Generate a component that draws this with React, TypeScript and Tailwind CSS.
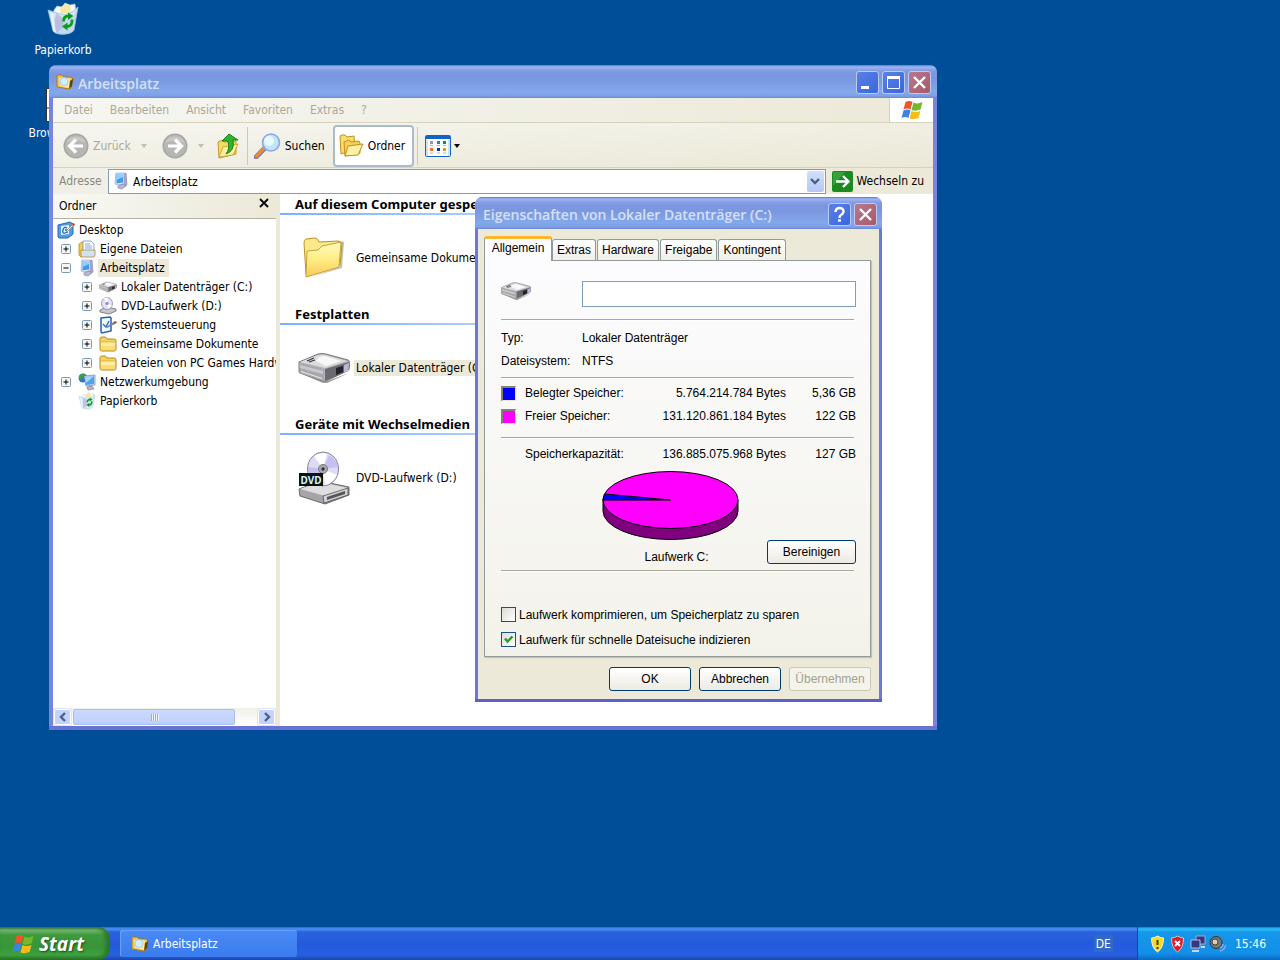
import React, { useState } from 'react';

/* Icons */

function BinIcon({ className }: { className: string }) {
  return (
    <svg viewBox="0 0 32 34" className={className} aria-hidden="true">
      <path d="M7 8l3-4 5 1 3-4 5 2 5-1 1 8-3 5H6z" fill="#f4f7fb" stroke="#b9c8d8" strokeWidth=".6" />
      <path d="M13 6l5-4 5 1 1 7-10 2z" fill="#f8e9a2" />
      <path d="M1 8l6 2 10 3 8-3 6-5-4 23c-2 5-18 6-21 1z" fill="#cfe6f7" fillOpacity=".92" stroke="#9cc4e4" strokeWidth=".8" />
      <path d="M9 11l6 4 2 9-7 7-3-4z" fill="#b8b4dc" fillOpacity=".7" />
      <path d="M3 10l3 18 3 3-3-20z" fill="#fff" fillOpacity=".7" />
      <path d="M16.500 19.500q0-5.500 5-5.500M25 17.500q.5 7-5 7" fill="none" stroke="#109a1c" strokeWidth="2.800" />
      <path d="M21 10.500l5.500 3.500-5.500 4zM20.500 20.500v8L15 24.500z" fill="#109a1c" />
    </svg>
  );
}

function FolderIcon({ className }: { className: string }) {
  return (
    <svg viewBox="0 0 42 42" className={className} aria-hidden="true">
      <path d="M4 41l35-10 2-26-2-1-2 26z" fill="#8f8a78" opacity=".55" />
      <path d="M1 6q0-3 2-4l9-1q3 0 4 4l19-1q4 0 4 4l-2 20-34 9z" fill="#fbe88a" stroke="#b99328" />
      <path d="M4 14l11-1 4-4 19-4-2 25-33 10z" fill="url(#folderFront)" stroke="#c39a2c" strokeWidth=".9" />
      <defs>
        <linearGradient id="folderFront" x1="0" y1="0" x2="0" y2="1">
          <stop offset="0" stopColor="#fffac0" />
          <stop offset=".5" stopColor="#ffee84" />
          <stop offset="1" stopColor="#fbc75a" />
        </linearGradient>
      </defs>
    </svg>
  );
}

function SmallFolderIcon({ className }: { className: string }) {
  return (
    <svg viewBox="0 0 18 18" className={className} aria-hidden="true">
      <path d="M1 4q0-2 2-2h3q1 0 2 2h7q2 0 2 2v8q0 2-2 2H3q-2 0-2-2z" fill="#f7d263" stroke="#b88c1c" />
      <path d="M1.500 7h15v7q0 1.500-1.500 1.500H3q-1.500 0-1.500-1.500z" fill="#fff0a0" stroke="#d0a437" strokeWidth=".7" />
      <path d="M2 11h14v3q0 1-1 1H3q-1 0-1-1z" fill="#fbdc78" />
    </svg>
  );
}

function DriveIcon({ className }: { className: string }) {
  return (
    <svg viewBox="0 0 52 30" className={className} aria-hidden="true">
      <path d="M2 20l24 9 25-9-24 11z" fill="#444" opacity=".5" />
      <path d="M1 9L20 1q4-1 8 0l22 6q2 1 2 3l-1 6q0 1-2 2L28 28q-2 1-4 0L2 20q-1 0-1-2z" fill="#b3b3b6" stroke="#6a6b70" strokeWidth=".9" />
      <path d="M2 9L20 2q4-1 8 0l21 6-22 7z" fill="#dcdcde" />
      <path d="M18 8q2-5 9-5l16 5-15 5z" fill="#f8f8f8" />
      <path d="M9 8l7-3M11 9l6-2" stroke="#333" strokeWidth="1.200" />
      <path d="M1 10l25 6v12L2 20z" fill="#a9a9ad" />
      <path d="M2 12l23 6v3L2 15z" fill="#c9c9cd" />
      <path d="M3 18l21 7v1L3 19z" fill="#ececee" />
      <path d="M27 16l24-7-1 9-23 10z" fill="#6a6a70" />
      <path d="M38 15l7-2v6l-7 3z" fill="#242428" />
      <path d="M46 12l5-2-1 8-4 2z" fill="#b9b7da" />
    </svg>
  );
}

function DvdIcon({ className }: { className: string }) {
  return (
    <svg viewBox="0 0 52 54" className={className} aria-hidden="true">
      <path d="M1 38l21-8 29 6v8L27 53 2 45z" fill="#a5a5a8" stroke="#5d5d62" strokeWidth=".9" />
      <path d="M2 38l20-7 28 6-23 8z" fill="#dededf" />
      <path d="M25 45l25-8v7L26 52z" fill="#d0d0d2" stroke="#444" strokeWidth=".7" />
      <path d="M29 46l18-6v3l-18 6z" fill="#55555a" />
      <ellipse cx="25" cy="18" rx="15.500" ry="17" fill="#dcdcf6" stroke="#85859c" />
      <path d="M25 18L16 5q7-4 13-2zM25 18l14 6q-4 8-12 10z" fill="#fff" />
      <path d="M25 18l6-14q8 5 9 12zM25 18L10 16q-1 8 5 14z" fill="#b9b5f0" opacity=".7" />
      <circle cx="25" cy="18" r="4.500" fill="#a9a9b5" stroke="#777" />
      <circle cx="25" cy="18" r="1.700" fill="#333" />
      <path d="M1 22h24v13H1z" fill="#061418" />
      <text x="13" y="33" textAnchor="middle" className="fill-[#d9f3f5] font-['Noto_Sans'] text-[10px] font-bold">DVD</text>
    </svg>
  );
}

function SmallDvdIcon({ className }: { className: string }) {
  return (
    <svg viewBox="0 0 18 18" className={className} aria-hidden="true">
      <path d="M1 13l6-3 10 2v2l-7 3-9-2z" fill="#c6c6ca" stroke="#6b6b70" strokeWidth=".8" />
      <ellipse cx="8" cy="6.500" rx="5.500" ry="6" fill="#e3e1fa" stroke="#8886a8" strokeWidth=".8" />
      <path d="M8 6L5 1l4-.5zM8 6l5 3-4 3z" fill="#fff" />
      <circle cx="8" cy="6.500" r="1.500" fill="#8b8b9c" />
    </svg>
  );
}

function ComputerIcon({ className }: { className: string }) {
  return (
    <svg viewBox="0 0 18 18" className={className} aria-hidden="true">
      <path d="M11 2l3-1 1 12-4 2z" fill="#a7a5cc" stroke="#8a88b4" strokeWidth=".7" />
      <path d="M4 1h8v11l-7 1-2-1z" fill="#e6e8f2" stroke="#9a9ec0" strokeWidth=".7" />
      <path d="M4.500 2H11v8.500l-6.500 1z" fill="#3e9af0" />
      <path d="M4.500 2H11v3L4.500 8z" fill="#8fd0ff" />
      <path d="M6 14l5-2 3 2-4 3-4-1z" fill="#b7b7d4" stroke="#7a7aa2" strokeWidth=".6" />
    </svg>
  );
}

function NetworkIcon({ className }: { className: string }) {
  return (
    <svg viewBox="0 0 18 18" className={className} aria-hidden="true">
      <circle cx="5" cy="5" r="4.500" fill="#2f74cf" />
      <path d="M1 3q3-3 6-2L5 4 3 7 1 6z" fill="#38a534" />
      <path d="M6 3l11-1v10l-9 1z" fill="#d8dcf0" stroke="#7a80a8" strokeWidth=".7" />
      <path d="M7 4l9-1v8l-8 1z" fill="#4aa5ef" />
      <path d="M7 4l9-1-8 7z" fill="#a3dafc" />
      <path d="M9 14l5-1 2 3-6 1z" fill="#b4b4d0" stroke="#6f6f95" strokeWidth=".6" />
    </svg>
  );
}

function DesktopIcon({ className }: { className: string }) {
  return (
    <svg viewBox="0 0 18 18" className={className} aria-hidden="true">
      <path d="M1 4l12-3 3 2v10l-5 4H2l-1-1z" fill="#4f9de6" stroke="#2766ae" />
      <path d="M4 5l8-1v9l-8 1z" fill="#e5f3fd" />
      <path d="M10 7q-3-2-4 2t2 3l3-1M8 9h3" fill="none" stroke="#1e66b5" strokeWidth="1.300" />
      <path d="M9 10l7-7 1 1-7 7z" fill="#f2f2f2" stroke="#555" strokeWidth=".5" />
      <path d="M15 3l2-1 1 2-2 1z" fill="#d04025" />
    </svg>
  );
}

function DocumentsIcon({ className }: { className: string }) {
  return (
    <svg viewBox="0 0 18 18" className={className} aria-hidden="true">
      <path d="M1 4l3-2 2 1v13l-3 1-2-2z" fill="#f5cd58" stroke="#b4871c" strokeWidth=".8" />
      <path d="M5 1h8l3 3v9H5z" fill="#fff" stroke="#6d8fc0" strokeWidth=".8" />
      <path d="M7 4h5M7 6h7M7 8h7" stroke="#79a7de" />
      <path d="M3 10h14v5q0 2-2 2H3z" fill="#cfe2f8" stroke="#b4871c" strokeWidth=".8" />
    </svg>
  );
}

function ControlPanelIcon({ className }: { className: string }) {
  return (
    <svg viewBox="0 0 18 18" className={className} aria-hidden="true">
      <path d="M2 2l9-1 1 1v13l-9 2-1-1z" fill="#f2f8ff" stroke="#2161b0" strokeWidth="1.500" />
      <path d="M4 8l3 3 3-6" fill="none" stroke="#2b6fc4" strokeWidth="1.400" />
      <path d="M7 11l8-5 1 2-8 4z" fill="#6f86a8" />
      <path d="M14 6l3-1 1 2-3 1z" fill="#a35a36" />
      <path d="M6 12l2-1v1z" fill="#e0a030" />
    </svg>
  );
}

function SearchFolderIcon({ className }: { className: string }) {
  return (
    <svg viewBox="0 0 18 16" className={className} aria-hidden="true">
      <path d="M1 2q0-1 1-1h4l2 2h7l2 2-2 9-2 1-12-2z" fill="#f5c64c" stroke="#a87a1c" />
      <path d="M3 4l9 0 2 1-1 9-9-2z" fill="#ffe9a0" />
      <circle cx="8" cy="7.500" r="4" fill="#d3efff" stroke="#9fcce8" />
      <path d="M13 15l1-8 3-2-1 7z" fill="#5c4312" />
    </svg>
  );
}

function WindowsFlag({ className }: { className: string }) {
  return (
    <svg viewBox="0 0 22 20" className={className} aria-hidden="true">
      <path d="M4.500 2q4-2 7 0L9.500 9.500q-3-2-7 0z" fill="#e8582a" />
      <path d="M12.500 2.500q4 2 9-.5l-2 7.500q-5 2-9 .5z" fill="#75b928" />
      <path d="M2.500 10.500q4-2 7 0L7.500 18q-3-2-7 0z" fill="#3c84dc" />
      <path d="M10.500 11q4 2 9 0l-2 7q-5 2-9 .5z" fill="#f6bd18" />
    </svg>
  );
}

function NavCircle({ flip }: { flip?: boolean }) {
  return (
    <svg viewBox="0 0 26 26" className={flip ? 'size-[26px] -scale-x-100' : 'size-[26px]'} aria-hidden="true">
      <circle cx="13" cy="13" r="12.500" fill="#a6a6a4" />
      <circle cx="13" cy="13" r="11" fill="#b6b6b4" />
      <path d="M3 10a11 11 0 0 1 20 0q-10-5-20 0z" fill="#c8c8c6" />
      <path d="M13 6.500L6.500 13l6.500 6.500M7 13h13" fill="none" stroke="#fff" strokeWidth="3.200" />
    </svg>
  );
}

function UpIcon() {
  return (
    <svg viewBox="0 0 22 26" className="h-[26px] w-[22px]" aria-hidden="true">
      <path d="M1 9l4-2 2 2 12-1v13L2 25z" fill="#f7d867" stroke="#c29a2a" />
      <path d="M2 24l4-10 15-3-5 11z" fill="#ffef9e" stroke="#c29a2a" strokeWidth=".8" />
      <path d="M12 1l9 6h-5q2 11-7 14 4-5 2-13H5z" fill="#2fb52c" stroke="#0e7714" strokeWidth=".9" />
    </svg>
  );
}

function SearchIcon() {
  return (
    <svg viewBox="0 0 27 26" className="h-[26px] w-[27px]" aria-hidden="true">
      <path d="M2 24l9-9" stroke="#8d7aa5" strokeWidth="5" strokeLinecap="round" />
      <path d="M2.500 23l8-8" stroke="#f08b34" strokeWidth="3" strokeLinecap="round" />
      <circle cx="17" cy="9.500" r="8.500" fill="#bfe4fd" stroke="#8ea6e0" strokeWidth="1.600" />
      <circle cx="15" cy="8" r="5" fill="#e9f8ff" />
    </svg>
  );
}

function FoldersIcon() {
  return (
    <svg viewBox="0 0 25 24" className="h-6 w-[25px]" aria-hidden="true">
      <path d="M1 3q0-2 2-2l3 0 2 2 7-1 1 12-8 4-6 2z" fill="#f9dd6c" stroke="#c18f22" />
      <path d="M5 8l5-2 2 2 8-1 1 2v10L6 22z" fill="#f7d055" stroke="#c18f22" />
      <path d="M6 22L9 12l15-2-5 11z" fill="#fff0a2" stroke="#c18f22" />
    </svg>
  );
}

function ViewsIcon() {
  return (
    <svg viewBox="0 0 26 22" className="h-[22px] w-[26px]" aria-hidden="true">
      <rect x=".5" y=".5" width="25" height="21" rx="1" fill="#fff" stroke="#1263c8" />
      <path d="M1 1h24v3H1z" fill="#1263c8" />
      <path d="M1 5h2v16H1zM23 5h2v16h-2z" fill="#cfe0f7" />
      <path d="M5 6h3v3H5z" fill="#9a8fd0" />
      <path d="M12 6h3v3h-3z" fill="#1680e8" />
      <path d="M18 6h3v3h-3z" fill="#149a20" />
      <path d="M5 13h3v3H5z" fill="#ff6a35" />
      <path d="M12 13h3v3h-3z" fill="#0a33a0" />
      <path d="M18 13h3v3h-3z" fill="#d5a207" />
      <path d="M5 10.500h3M12 10.500h3M18 10.500h3M5 18h3M12 18h3M18 18h3" stroke="#b4b4b4" />
    </svg>
  );
}

function Caret({ className }: { className: string }) {
  return (
    <svg viewBox="0 0 6 4" className={className} aria-hidden="true">
      <path d="M0 0h6L3 4z" fill="currentColor" />
    </svg>
  );
}

function Chevron({ className }: { className: string }) {
  return (
    <svg viewBox="0 0 10 10" className={className} aria-hidden="true">
      <path d="M1 3l4 4 4-4" fill="none" stroke="#4d6185" strokeWidth="2.400" />
    </svg>
  );
}

/* Window chrome */

const titleGradient =
  'bg-[linear-gradient(to_bottom,#5d76d3_0,#9fb6ee_2px,#86a0e6_5px,#7a96df_9px,#7b98e1_45%,#82a8ea_80%,#7f9fe6_94%,#6b84d8_100%)]';

type CaptionKind = 'min' | 'max' | 'help' | 'close';

function CaptionButton({ kind, label }: { kind: CaptionKind; label: string }) {
  return (
    <button
      type="button"
      aria-label={label}
      className={`flex size-[23px] items-center justify-center rounded-[3px] border border-[#bccaf2] ${
        kind === 'close'
          ? 'bg-linear-to-br from-[#b8788f] to-[#a75a68]'
          : 'bg-linear-to-br from-[#5b80e4] to-[#3767e0]'
      }`}
    >
      <svg viewBox="0 0 21 21" className="size-[21px]" fill="none" stroke="#fff" aria-hidden="true">
        {kind === 'min' && <path d="M4 15.500h8" strokeWidth="3" />}
        {kind === 'max' && (
          <>
            <path d="M4.500 5v11.500h12V5" />
            <path d="M4 5.500h13" strokeWidth="3" />
          </>
        )}
        {kind === 'close' && <path d="M5 5l11 11M16 5L5 16" strokeWidth="2.400" />}
        {kind === 'help' && (
          <>
            <path d="M6.500 8q0-4 4-4t4 3.500q0 2-2.500 3.500-1.500 1-1.500 3" strokeWidth="2.400" />
            <path d="M9 16.500h3" strokeWidth="2.400" />
          </>
        )}
      </svg>
    </button>
  );
}

/* Explorer */

const menus = ['Datei', 'Bearbeiten', 'Ansicht', 'Favoriten', 'Extras', '?'];

interface TreeNode {
  label: string;
  level: 0 | 1 | 2;
  expander?: '+' | '-';
  selected?: boolean;
  Icon: (props: { className: string }) => React.ReactElement;
}

const tree: TreeNode[] = [
  { label: 'Desktop', level: 0, Icon: DesktopIcon },
  { label: 'Eigene Dateien', level: 1, expander: '+', Icon: DocumentsIcon },
  { label: 'Arbeitsplatz', level: 1, expander: '-', selected: true, Icon: ComputerIcon },
  { label: 'Lokaler Datenträger (C:)', level: 2, expander: '+', Icon: DriveIcon },
  { label: 'DVD-Laufwerk (D:)', level: 2, expander: '+', Icon: SmallDvdIcon },
  { label: 'Systemsteuerung', level: 2, expander: '+', Icon: ControlPanelIcon },
  { label: 'Gemeinsame Dokumente', level: 2, expander: '+', Icon: SmallFolderIcon },
  { label: 'Dateien von PC Games Hardware', level: 2, expander: '+', Icon: SmallFolderIcon },
  { label: 'Netzwerkumgebung', level: 1, expander: '+', Icon: NetworkIcon },
  { label: 'Papierkorb', level: 1, Icon: BinIcon },
];

const indent = { 0: 'pl-1', 1: 'pl-2', 2: 'pl-[29px]' };

function TreeRow({ node }: { node: TreeNode }) {
  return (
    <li className={`flex h-[19px] items-center whitespace-nowrap ${indent[node.level]}`}>
      {node.level > 0 && (
        <span className="mr-[7px] flex size-[10px] shrink-0">
          {node.expander && (
            <button type="button" aria-label={`${node.label} umschalten`} className="size-[10px]">
              <svg viewBox="0 0 10 10" className="size-[10px]" aria-hidden="true">
                <rect x=".5" y=".5" width="9" height="9" rx="1" fill="#f6f5ef" stroke="#7b98b8" />
                <path d={node.expander === '+' ? 'M2.500 5h5M5 2.500v5' : 'M2.500 5h5'} stroke="#000" />
              </svg>
            </button>
          )}
        </span>
      )}
      <node.Icon className="h-[18px] w-[18px] shrink-0" />
      <a href="#" className={`ml-[2px] px-[2px] leading-[18px] ${node.selected ? 'bg-[#ece9d8] pr-1' : ''}`}>
        {node.label}
      </a>
    </li>
  );
}

const groups = [
  { title: 'Auf diesem Computer gespeicherte Dateien', item: 'Gemeinsame Dokumente', Icon: FolderIcon, size: 'h-[42px] w-[42px]' },
  { title: 'Festplatten', item: 'Lokaler Datenträger (C:)', Icon: DriveIcon, size: 'h-[30px] w-[52px]', selected: true },
  { title: 'Geräte mit Wechselmedien', item: 'DVD-Laufwerk (D:)', Icon: DvdIcon, size: 'h-[54px] w-[52px]' },
];

function ScrollButton({ side }: { side: 'left' | 'right' }) {
  return (
    <button
      type="button"
      aria-label={side === 'left' ? 'Nach links' : 'Nach rechts'}
      className="flex h-4 w-[17px] items-center justify-center rounded-[2px] border border-white bg-[#c3d3fb] shadow-[0_0_0_1px_#dbe4f8]"
    >
      <Chevron className={side === 'left' ? 'size-[10px] rotate-90' : 'size-[10px] -rotate-90'} />
    </button>
  );
}

function Explorer() {
  return (
    <section
      aria-label="Arbeitsplatz"
      className="absolute top-[65px] left-[49px] flex h-[665px] w-[888px] flex-col rounded-t-[8px] border-b-4 border-[#6673d2] bg-[#7785dc]"
    >
      <header className={`flex h-[33px] shrink-0 items-center rounded-t-[7px] pr-[6px] pl-[7px] ${titleGradient}`}>
        <SearchFolderIcon className="h-4 w-[18px]" />
        <h1 className="ml-1 flex-1 pt-1 font-['Open_Sans',sans-serif] text-[14px] font-semibold text-[#d5e0f8]">Arbeitsplatz</h1>
        <div className="flex gap-[3px] pt-[2px]">
          <CaptionButton kind="min" label="Minimieren" />
          <CaptionButton kind="max" label="Maximieren" />
          <CaptionButton kind="close" label="Schließen" />
        </div>
      </header>

      <div className="mx-1 flex min-h-0 flex-1 flex-col bg-white">
        <div className="flex h-[25px] shrink-0 border-b border-[#d8d2bd] bg-linear-to-r from-[#f6f6f2] to-[#ece9d8]">
          <nav className="flex flex-1 items-center gap-[17px] pl-[11px] text-[#aca899]">
            {menus.map((menu) => (
              <button type="button" key={menu}>{menu}</button>
            ))}
          </nav>
          <div className="flex w-[44px] items-center justify-center border-l border-[#d8d2bd] bg-white">
            <WindowsFlag className="h-5 w-[22px]" />
          </div>
        </div>

        {/* Toolbar */}
        <div className="flex h-[45px] shrink-0 items-center border-b border-[#d8d2bd] bg-linear-to-br from-[#f6f6f1] to-[#ebe8d6] pt-[2px] pl-[10px]">
          <button type="button" disabled className="flex items-center text-[#aca899]">
            <NavCircle />
            <span className="ml-1">Zurück</span>
            <Caret className="ml-[10px] h-1 w-[6px] text-[#c2bfb2]" />
          </button>
          <button type="button" disabled aria-label="Vorwärts" className="ml-[15px] flex items-center text-[#c2bfb2]">
            <NavCircle flip />
            <Caret className="ml-[10px] h-1 w-[6px]" />
          </button>
          <button type="button" aria-label="Aufwärts" className="ml-[13px]">
            <UpIcon />
          </button>
          <span className="ml-2 h-[38px] w-px bg-[#cdc9b8]" />
          <button type="button" className="ml-[6px] flex items-center">
            <SearchIcon />
            <span className="ml-1">Suchen</span>
          </button>
          <button
            type="button"
            aria-pressed="true"
            className="ml-2 flex h-[42px] w-[81px] items-center rounded-[4px] border-2 border-[#a9bccb] bg-white pl-1"
          >
            <FoldersIcon />
            <span className="ml-1">Ordner</span>
          </button>
          <span className="ml-[3px] h-[38px] w-px bg-[#cdc9b8]" />
          <button type="button" aria-label="Ansichten" className="ml-[7px] flex items-center">
            <ViewsIcon />
            <Caret className="ml-[3px] h-1 w-[6px]" />
          </button>
        </div>

        {/* Address bar */}
        <div className="flex h-[26px] shrink-0 items-center bg-linear-to-r from-[#f1f0e8] to-[#ece9d8]">
          <label htmlFor="address" className="w-[55px] pl-[6px] text-[#8b887b]">Adresse</label>
          <div className="relative flex h-[25px] flex-1 items-center border border-[#7f9db9] bg-white pl-[3px]">
            <ComputerIcon className="size-[18px]" />
            <select id="address" className="h-full flex-1 appearance-none bg-transparent pt-px pl-[3px] outline-none">
              <option>Arbeitsplatz</option>
            </select>
            <span className="pointer-events-none absolute right-px flex h-[21px] w-[17px] items-center justify-center rounded-[2px] bg-linear-to-b from-[#d3dffc] to-[#b4c8f6]">
              <Chevron className="size-[10px]" />
            </span>
          </div>
          <button type="button" className="flex items-center pr-[9px] pl-[6px]">
            <svg viewBox="0 0 21 21" className="size-[21px]" aria-hidden="true">
              <rect width="21" height="21" rx="2" fill="#1c8a22" />
              <path d="M1 1h12L1 15z" fill="#4fae50" opacity=".6" />
              <path d="M4 10.500h12M11 5l5.500 5.500L11 16" fill="none" stroke="#fff" strokeWidth="2.400" />
            </svg>
            <span className="ml-1">Wechseln zu</span>
          </button>
        </div>

        <div className="flex min-h-0 flex-1">
          <aside className="flex w-[227px] shrink-0 flex-col border-r-4 border-[#ece9d8]">
            <div className="flex h-[25px] items-center justify-between border-b border-[#b5b2a4] bg-linear-to-r from-[#f8f8f5] to-[#ece9d8] pr-[7px] pl-[6px]">
              <h2>Ordner</h2>
              <button type="button" aria-label="Ordnerleiste schließen" className="pb-[6px]">
                <svg viewBox="0 0 10 10" className="size-[10px]" aria-hidden="true">
                  <path d="M1 1l8 8M9 1L1 9" stroke="#000" strokeWidth="1.800" />
                </svg>
              </button>
            </div>
            <ul className="flex-1 overflow-hidden pt-px">
              {tree.map((node) => (
                <TreeRow key={node.label} node={node} />
              ))}
            </ul>
            <div className="flex h-[18px] items-center bg-linear-to-b from-[#f0efe8] to-white px-px">
              <ScrollButton side="left" />
              <span className="ml-[2px] flex h-4 w-[162px] items-center justify-center gap-px rounded-[2px] border border-[#a9bff0] bg-linear-to-b from-[#cbdafd] to-[#bdcffa]">
                {[0, 1, 2, 3].map((i) => (
                  <span key={i} className="h-[7px] w-px bg-[#8fadf0] shadow-[1px_0_0_#eef4fe]" />
                ))}
              </span>
              <span className="flex-1" />
              <ScrollButton side="right" />
            </div>
          </aside>

          <div className="min-w-0 flex-1 overflow-hidden whitespace-nowrap">
            {groups.map(({ title, item, Icon, size, selected }) => (
              <section key={title} className="flex h-[110px] flex-col">
                <h2 className="pt-px pl-[15px] font-['Noto_Sans',sans-serif] text-[13px] leading-[18px] font-bold">{title}</h2>
                <div className="h-[2px] bg-linear-to-r from-[#7db2fb] to-white to-90%" />
                <a href="#" className="flex flex-1 items-center pb-[3px] pl-[18px]">
                  <span className="mr-1 flex w-[52px] justify-center">
                    <Icon className={size} />
                  </span>
                  <span className={`px-[2px] ${selected ? 'bg-[#ece9d8]' : ''}`}>{item}</span>
                </a>
              </section>
            ))}
          </div>
        </div>
      </div>
    </section>
  );
}

/* Properties dialog */

const tabs = ['Allgemein', 'Extras', 'Hardware', 'Freigabe', 'Kontingent'];

const usage = [
  { label: 'Belegter Speicher:', bytes: '5.764.214.784 Bytes', gb: '5,36 GB', swatch: 'bg-[#0000ff]' },
  { label: 'Freier Speicher:', bytes: '131.120.861.184 Bytes', gb: '122 GB', swatch: 'bg-[#ff00ff]' },
];

function Divider() {
  return <hr className="mr-[2px] h-[2px] border-t border-b border-t-[#aca899] border-b-white" />;
}

function UsagePie() {
  return (
    <svg viewBox="0 0 137 70" className="h-[70px] w-[137px]" role="img" aria-label="Speicherbelegung">
      <path d="M1 29v11a67.500 28.500 0 0 0 135 0V29z" fill="#800080" stroke="#000" />
      <ellipse cx="68.500" cy="29" rx="67.500" ry="28.500" fill="#ff00ff" stroke="#000" />
      <path d="M68.500 29H1q0-3 2-6z" fill="#0000ff" stroke="#000" />
    </svg>
  );
}

function DialogButton({ children, wide, disabled }: { children: string; wide?: boolean; disabled?: boolean }) {
  return (
    <button
      type="button"
      disabled={disabled}
      className={`h-6 rounded-[3px] border ${wide ? 'w-[89px]' : 'w-[82px]'} ${
        disabled
          ? 'border-[#c9c7ba] bg-[#f5f4ea] text-[#a1a192]'
          : 'border-[#003c74] bg-linear-to-b from-white to-[#eceae2]'
      }`}
    >
      {children}
    </button>
  );
}

function Properties() {
  const [label, setLabel] = useState('');
  const [compress, setCompress] = useState(false);
  const [index, setIndex] = useState(true);

  const options = [
    { id: 'compress', text: 'Laufwerk komprimieren, um Speicherplatz zu sparen', value: compress, set: setCompress },
    { id: 'index', text: 'Laufwerk für schnelle Dateisuche indizieren', value: index, set: setIndex },
  ];

  return (
    <section
      role="dialog"
      aria-label="Eigenschaften von Lokaler Datenträger (C:)"
      className="absolute top-[197px] left-[475px] w-[407px] rounded-t-[8px] border-b-[3px] border-[#5a61c8] bg-[#6a78d8] font-['Liberation_Sans',Arial,sans-serif] text-[12px]"
    >
      <header className={`flex h-8 items-center rounded-t-[7px] pr-[5px] pl-2 ${titleGradient}`}>
        <h2 className="flex-1 pt-1 font-['Open_Sans',sans-serif] text-[14px] font-semibold text-[#d5e0f8]">
          Eigenschaften von Lokaler Datenträger (C:)
        </h2>
        <div className="flex gap-[3px] pt-[2px]">
          <CaptionButton kind="help" label="Hilfe" />
          <CaptionButton kind="close" label="Schließen" />
        </div>
      </header>

      <div className="mx-[3px] bg-[#ece9d8] pt-[7px] pr-2 pb-2 pl-[6px]">
        <div role="tablist" className="flex h-6 items-end">
          {tabs.map((tab, i) => (
            <button
              type="button"
              role="tab"
              key={tab}
              aria-selected={i === 0}
              className={
                i === 0
                  ? 'relative z-10 -mb-px h-[25px] w-[68px] rounded-t-[3px] border-x border-t-[3px] border-x-[#919b9c] border-t-[#ffb62e] bg-[#fcfcfe] pb-1'
                  : 'mr-px h-[21px] rounded-t-[3px] border border-b-0 border-[#919b9c] bg-linear-to-b from-white to-[#f0efe7] px-1'
              }
            >
              {tab}
            </button>
          ))}
        </div>

        <div className="border border-[#919b9c] bg-linear-to-b from-[#fcfcfe] to-[#f3f2ea] pt-5 pr-[14px] pb-1 pl-4 shadow-[1px_1px_1px_#c6c3b4]">
          <div className="flex h-[26px] items-start justify-between">
            <DriveIcon className="h-5 w-[30px]" />
            <input
              aria-label="Bezeichnung"
              value={label}
              onChange={(e) => setLabel(e.target.value)}
              className="h-[26px] w-[274px] border border-[#7f9db9] bg-white px-1 outline-none"
            />
          </div>
          <div className="h-3" />
          <Divider />

          <dl className="mt-[6px] mb-1 grid grid-cols-[81px_1fr] leading-[23px]">
            <dt>Typ:</dt>
            <dd>Lokaler Datenträger</dd>
            <dt>Dateisystem:</dt>
            <dd>NTFS</dd>
          </dl>
          <Divider />

          <table className="mt-[3px] mb-[9px] w-full leading-[23px]">
            <tbody>
              {usage.map((row) => (
                <tr key={row.label} className="h-[23px]">
                  <td className="w-6 p-0">
                    <span className={`block size-[15px] border border-t-2 border-l-2 border-[#e8e6da] border-t-[#85836f] border-l-[#85836f] ${row.swatch}`} />
                  </td>
                  <td className="p-0">{row.label}</td>
                  <td className="p-0 text-right">{row.bytes}</td>
                  <td className="w-[70px] p-0 text-right">{row.gb}</td>
                </tr>
              ))}
            </tbody>
          </table>
          <Divider />

          <table className="mt-1 w-full leading-[23px]">
            <tbody>
              <tr>
                <td className="p-0 pl-6">Speicherkapazität:</td>
                <td className="p-0 text-right">136.885.075.968 Bytes</td>
                <td className="w-[70px] p-0 text-right">127 GB</td>
              </tr>
            </tbody>
          </table>

          <div className="mt-[5px] mb-[6px] flex items-end justify-between pl-[101px]">
            <figure className="flex flex-col items-center">
              <UsagePie />
              <figcaption className="mt-[10px] pl-3 leading-[13px]">Laufwerk C:</figcaption>
            </figure>
            <DialogButton wide>Bereinigen</DialogButton>
          </div>
          <Divider />

          <div className="mt-[30px]">
            {options.map((option) => (
              <div key={option.id} className="flex h-[25px] items-center">
                <input
                  id={option.id}
                  type="checkbox"
                  checked={option.value}
                  onChange={(e) => option.set(e.target.checked)}
                  className="peer size-[15px] appearance-none border border-[#1c5180] bg-linear-to-br from-[#dcdcd7] to-white"
                />
                <svg viewBox="0 0 15 15" className="pointer-events-none invisible -ml-[15px] size-[15px] peer-checked:visible" aria-hidden="true">
                  <path d="M4 6.500l2.500 3L11.500 4.500" fill="none" stroke="#21a121" strokeWidth="2.400" />
                </svg>
                <label htmlFor={option.id} className="pl-[3px]">{option.text}</label>
              </div>
            ))}
          </div>
        </div>

        <div className="mt-[10px] flex justify-end gap-2">
          <DialogButton>OK</DialogButton>
          <DialogButton>Abbrechen</DialogButton>
          <DialogButton disabled>Übernehmen</DialogButton>
        </div>
      </div>
    </section>
  );
}

/* Taskbar */

function Taskbar() {
  return (
    <footer className="flex h-[33px] shrink-0 items-stretch bg-[linear-gradient(to_bottom,#2a66d8_0,#4a92f0_2px,#2a62dc_5px,#245adb_50%,#2660e0_85%,#1c47a8_100%)] text-white">
      <button
        type="button"
        className="flex w-[110px] items-center rounded-r-[12px] bg-[linear-gradient(to_bottom,#2e7a30_0,#78b876_3px,#3c9a3c_8px,#389438_60%,#3ea23e_85%,#2b6f2b_100%)] pl-3 shadow-[inset_-4px_0_5px_#2a702a]"
      >
        <WindowsFlag className="h-5 w-[22px]" />
        <span className="ml-[5px] font-['Open_Sans',sans-serif] text-[19px] font-bold italic [text-shadow:1px_1px_2px_#1c4a1c]">Start</span>
      </button>
      <button
        type="button"
        className="mt-[3px] mb-[3px] ml-[10px] flex w-[177px] items-center rounded-[3px] bg-linear-to-b from-[#4a8af5] to-[#3a7cee] pl-[11px] shadow-[inset_1px_1px_1px_#6aa2fa]"
      >
        <SearchFolderIcon className="h-4 w-[18px]" />
        <span className="ml-1">Arbeitsplatz</span>
      </button>
      <span className="flex-1" />
      <span className="my-2 mr-6 flex items-center bg-[#316ac5] px-[2px]">DE</span>
      <div className="flex items-center border-l border-[#0b4aa8] bg-[linear-gradient(to_bottom,#1578d8_0,#2ac0f8_2px,#1697ea_5px,#1290e8_80%,#0d68c0_100%)] pr-[14px] pl-3">
        <svg viewBox="0 0 76 18" className="h-[18px] w-[76px]" aria-hidden="true">
          <path d="M7.500 1q3 2 6 2 0 10-6 14Q1.500 13 1.500 3q3 0 6-2z" fill="#f8dc1c" stroke="#f7f2d5" />
          <path d="M7.500 5v5M7.500 12v2" stroke="#403a10" strokeWidth="2" />
          <path d="M27.500 1q3 2 6 2 0 10-6 14-6-4-6-14 3 0 6-2z" fill="#d81c2a" stroke="#f0b8b8" />
          <path d="M25 6l5 5M30 6l-5 5" stroke="#fff" strokeWidth="2" />
          <path d="M46 1h9v8h-9z" fill="#35387c" stroke="#a4a8d8" />
          <path d="M41 5h9v8h-9z" fill="#35387c" stroke="#b9bce4" />
          <path d="M42 15h7v2h-7zM51 11h4v2h-4z" fill="#cdd2ee" />
          <circle cx="66" cy="7.500" r="6" fill="#777774" stroke="#33332f" />
          <circle cx="65" cy="7" r="3" fill="#d0d0ca" stroke="#44443f" />
          <path d="M70 13q3-1 3-4M70 16q5-1 5.500-6" fill="none" stroke="#8fa8f0" strokeWidth="1.300" />
        </svg>
        <time className="ml-[9px]">15:46</time>
      </div>
    </footer>
  );
}

export default function App() {
  return (
    <div className="flex min-h-screen flex-col overflow-hidden bg-[#004e98] font-['DejaVu_Sans_Condensed','Noto_Sans',sans-serif] text-[12px] leading-4 text-black">
      <main className="relative flex-1">
        {/* Desktop shortcuts */}
        <a href="#" className="absolute top-[2px] left-[13px] flex w-[100px] flex-col items-center text-white">
          <BinIcon className="h-[34px] w-8" />
          <span className="mt-[6px]">Papierkorb</span>
        </a>
        <a href="#" className="absolute top-[88px] left-[13px] flex w-[100px] flex-col items-center text-white">
          <svg viewBox="0 0 34 34" className="h-[34px] w-[34px]" aria-hidden="true">
            <path d="M.5.5h33v33H.5z" fill="#fff" stroke="#333" />
            <path d="M0 20h34" stroke="#333" />
          </svg>
          <span className="mt-[3px]">Browserwahl</span>
        </a>
        <Explorer />
        <Properties />
      </main>
      <Taskbar />
    </div>
  );
}
